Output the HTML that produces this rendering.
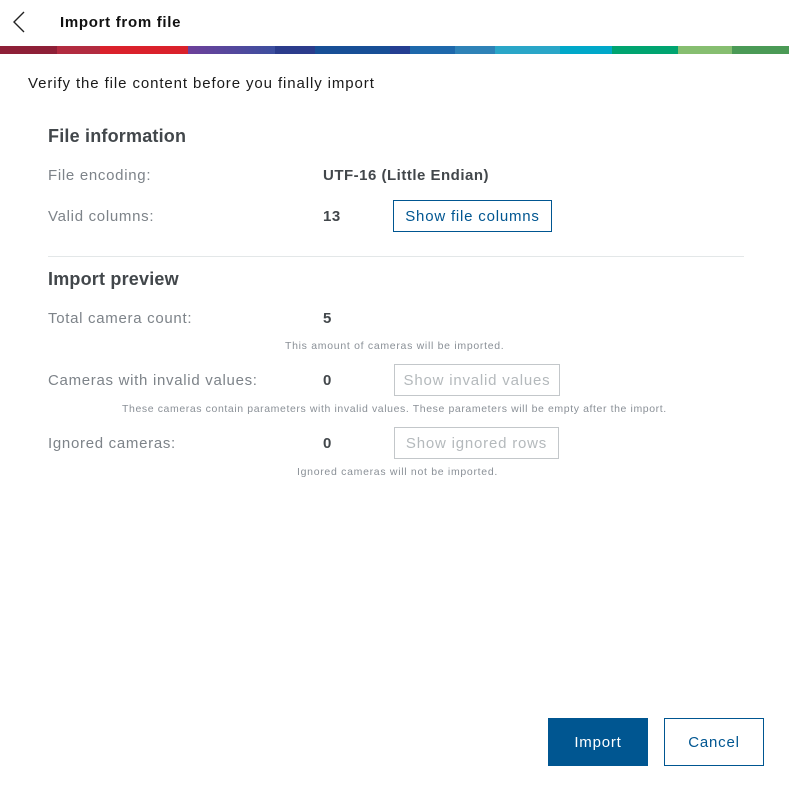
<!DOCTYPE html>
<html><head><style>
body{margin:0;width:789px;height:789px;background:#fff;font-family:"Liberation Sans",sans-serif;position:relative;overflow:hidden}
.a{position:absolute;white-space:nowrap}
.lbl{font-size:15px;color:#7d8389;letter-spacing:0.7px}
.val{font-size:15px;font-weight:bold;color:#42474b;letter-spacing:0.5px}
.h{font-size:18px;font-weight:bold;color:#42474b;letter-spacing:0.2px}
.note{font-size:10.5px;color:#8a9097;letter-spacing:0.7px}
.btn{position:absolute;box-sizing:border-box;border:1px solid #005691;color:#005691;font-size:15px;text-align:center;letter-spacing:0.8px}
.dis{border-color:#c3c7ca;color:#b4b9bc}
.bar{position:absolute;top:46px;height:8px}
</style></head><body>
<svg class="a" style="left:12px;top:11px" width="14" height="22"><path d="M12 1 L2 11 L12 21" fill="none" stroke="#222" stroke-width="1.4"/></svg>
<div class="a" style="left:60px;top:14px;font-size:15px;font-weight:bold;color:#111;letter-spacing:0.7px">Import from file</div>
<div class="bar" style="left:0;width:57px;background:#8e2037"></div>
<div class="bar" style="left:57px;width:43px;background:#b22b40"></div>
<div class="bar" style="left:100px;width:88px;background:#da212b"></div>
<div class="bar" style="left:188px;width:87px;background:linear-gradient(90deg,#6d409a,#3c4f9f)"></div>
<div class="bar" style="left:275px;width:40px;background:#2b3c8c"></div>
<div class="bar" style="left:315px;width:75px;background:#174f96"></div>
<div class="bar" style="left:390px;width:20px;background:#243e92"></div>
<div class="bar" style="left:410px;width:45px;background:#1e68ab"></div>
<div class="bar" style="left:455px;width:40px;background:#2e82b7"></div>
<div class="bar" style="left:495px;width:65px;background:#2aa6c8"></div>
<div class="bar" style="left:560px;width:52px;background:#00a8c9"></div>
<div class="bar" style="left:612px;width:66px;background:#00a470"></div>
<div class="bar" style="left:678px;width:54px;background:#86be70"></div>
<div class="bar" style="left:732px;width:57px;background:#4b9a56"></div>
<div class="a" style="left:28px;top:75px;font-size:15px;color:#1a1a1a;letter-spacing:0.9px">Verify the file content before you finally import</div>
<div class="a h" style="left:48px;top:126px">File information</div>
<div class="a lbl" style="left:48px;top:167px">File encoding:</div>
<div class="a val" style="left:323px;top:167px">UTF-16 (Little Endian)</div>
<div class="a lbl" style="left:48px;top:208px">Valid columns:</div>
<div class="a val" style="left:323px;top:208px">13</div>
<div class="btn" style="left:393px;top:200px;width:159px;height:32px;line-height:31px">Show file columns</div>
<div class="a" style="left:48px;top:256px;width:696px;height:1px;background:#e3e7e8"></div>
<div class="a h" style="left:48px;top:269px">Import preview</div>
<div class="a lbl" style="left:48px;top:310px">Total camera count:</div>
<div class="a val" style="left:323px;top:310px">5</div>
<div class="a note" style="left:285px;top:340px">This amount of cameras will be imported.</div>
<div class="a lbl" style="left:48px;top:372px">Cameras with invalid values:</div>
<div class="a val" style="left:323px;top:372px">0</div>
<div class="btn dis" style="left:394px;top:364px;width:166px;height:32px;line-height:31px">Show invalid values</div>
<div class="a note" style="left:122px;top:403px;letter-spacing:0.6px">These cameras contain parameters with invalid values. These parameters will be empty after the import.</div>
<div class="a lbl" style="left:48px;top:435px">Ignored cameras:</div>
<div class="a val" style="left:323px;top:435px">0</div>
<div class="btn dis" style="left:394px;top:427px;width:165px;height:32px;line-height:31px">Show ignored rows</div>
<div class="a note" style="left:297px;top:466px">Ignored cameras will not be imported.</div>
<div class="btn" style="left:548px;top:718px;width:100px;height:48px;line-height:47px;background:#005691;color:#fff">Import</div>
<div class="btn" style="left:664px;top:718px;width:100px;height:48px;line-height:47px">Cancel</div>
</body></html>
